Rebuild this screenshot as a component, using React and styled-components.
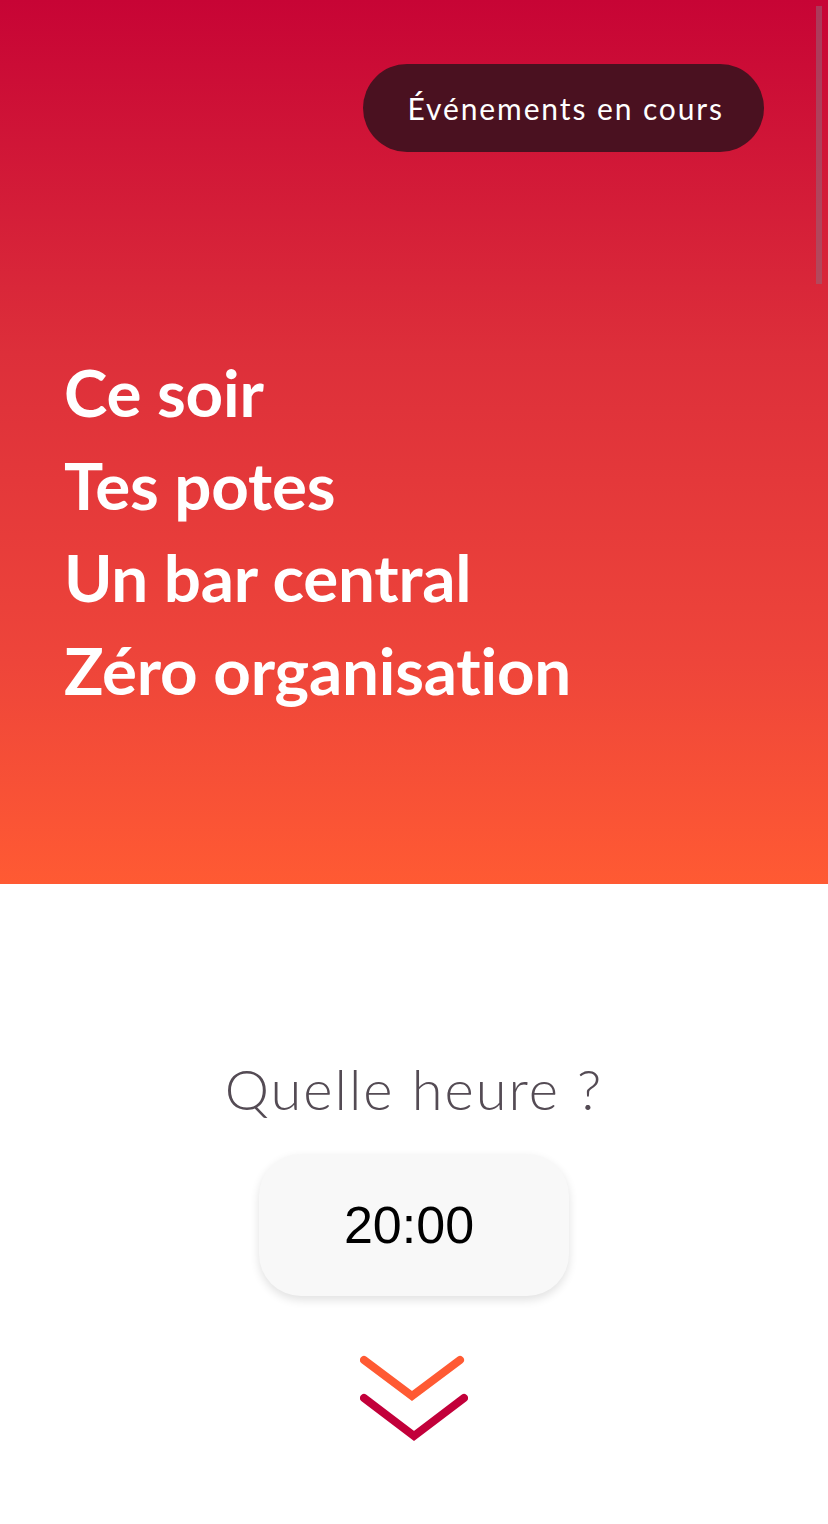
import React from "react";
import styled, { createGlobalStyle } from "styled-components";

const GlobalStyle = createGlobalStyle`
  html, body {
    margin: 0;
    padding: 0;
    background: #ffffff;
  }
  body {
    font-family: "Lato", "Open Sans", sans-serif;
  }
`;

const Page = styled.div`
  width: 828px;
  min-height: 1524px;
  display: flex;
  flex-direction: column;
`;

const Hero = styled.header`
  height: 884px;
  box-sizing: border-box;
  padding: 64px 64px 0 64px;
  background: linear-gradient(180deg, #c70435 0%, #dd2f3a 40%, #ee453a 75%, #ff5a33 100%);
  display: flex;
  flex-direction: column;
`;

const TopBar = styled.div`
  display: flex;
  justify-content: flex-end;
`;

const EventsButton = styled.button`
  height: 88px;
  padding: 0 40px 0 44px;
  border: none;
  border-radius: 44px;
  background: #4a1120;
  color: #ffffff;
  font-family: "Lato", sans-serif;
  font-weight: 400;
  font-size: 30px;
  letter-spacing: 1.9px;
  cursor: pointer;
`;

const Headline = styled.h1`
  margin: 194px 0 0 0;
  color: #ffffff;
  font-family: "Lato", sans-serif;
  font-weight: 700;
  font-size: 65.5px;
  line-height: 92.5px;
  letter-spacing: -0.2px;
`;

const Line = styled.span`
  display: block;
`;

const Content = styled.section`
  display: flex;
  flex-direction: column;
  align-items: center;
  padding-top: 169px;
`;

const Question = styled.h2`
  margin: 0;
  color: #544b54;
  font-family: "Lato", sans-serif;
  font-weight: 300;
  font-size: 56px;
  line-height: 72px;
  letter-spacing: 2px;
`;

const TimeBox = styled.div`
  margin-top: 29px;
  width: 310px;
  height: 142px;
  box-sizing: border-box;
  padding-right: 10px;
  border-radius: 42px;
  background: #f8f8f8;
  box-shadow: 0 4px 10px rgba(0, 0, 0, 0.12);
  display: flex;
  align-items: center;
  justify-content: center;
  color: #000000;
  font-family: "Liberation Sans", Arial, sans-serif;
  font-size: 52px;
`;

const ScrollHint = styled.div`
  margin-top: 58px;
  display: flex;
  justify-content: center;
`;

const ScrollThumb = styled.div`
  position: fixed;
  top: 6px;
  right: 6px;
  width: 6px;
  height: 278px;
  background: rgba(150, 100, 120, 0.55);
`;

const lines = ["Ce soir", "Tes potes", "Un bar central", "Zéro organisation"];

export default function App() {
  return (
    <Page>
      <GlobalStyle />
      <Hero>
        <TopBar>
          <EventsButton>Événements en cours</EventsButton>
        </TopBar>
        <Headline>
          {lines.map((l) => (
            <Line key={l}>{l}</Line>
          ))}
        </Headline>
      </Hero>
      <Content>
        <Question>Quelle heure ?</Question>
        <TimeBox>20:00</TimeBox>
        <ScrollHint>
          <svg width="108" height="90" viewBox="0 0 108 90">
            <polyline
              points="4,6 52,42 100,6"
              fill="none"
              stroke="#ff5a33"
              strokeWidth="8"
              strokeLinecap="round"
              strokeLinejoin="miter"
            />
            <polyline
              points="4,44 54,82 104,44"
              fill="none"
              stroke="#c2003a"
              strokeWidth="8"
              strokeLinecap="round"
              strokeLinejoin="miter"
            />
          </svg>
        </ScrollHint>
      </Content>
      <ScrollThumb />
    </Page>
  );
}
